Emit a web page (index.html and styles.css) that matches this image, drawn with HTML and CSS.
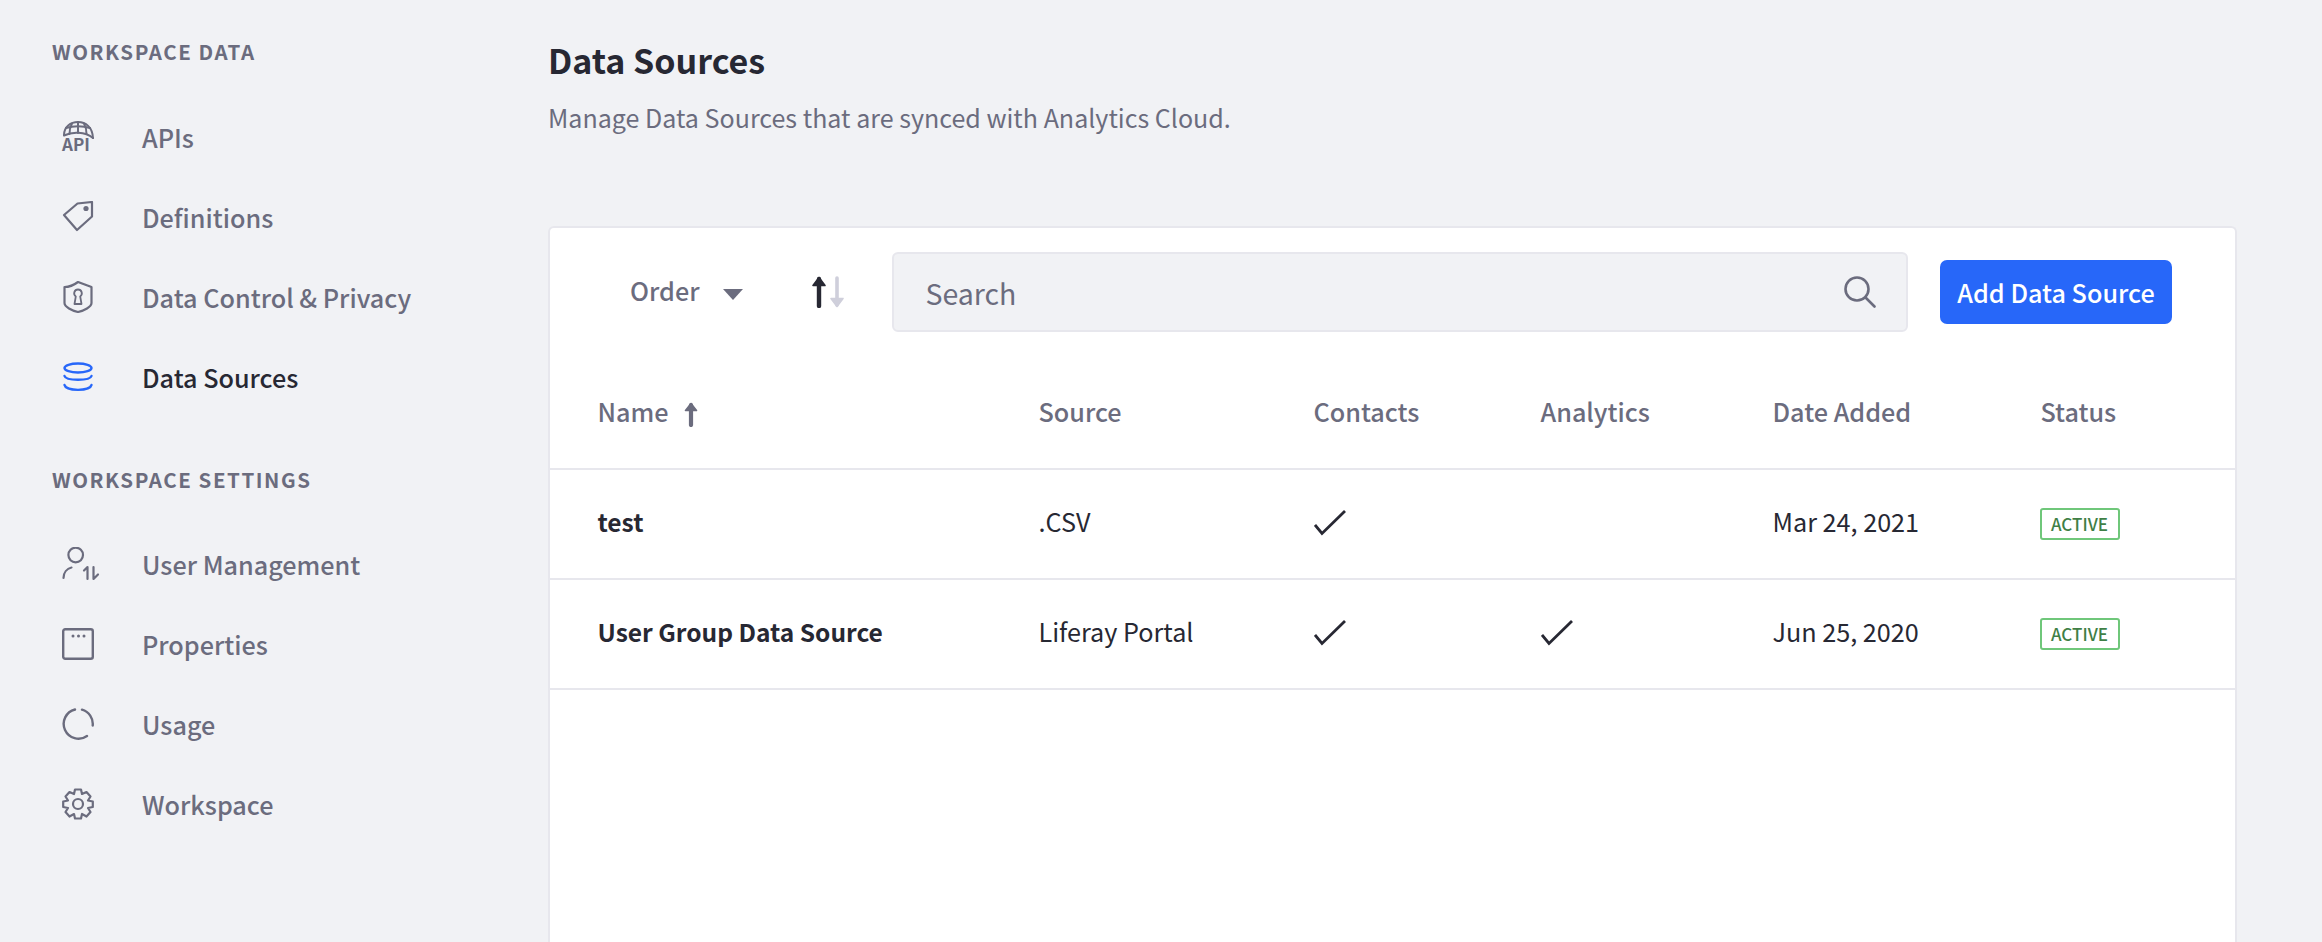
FILE: index.html
```html
<!DOCTYPE html>
<html lang="en">
<head>
  <meta charset="UTF-8">
  <title>Data Sources</title>
  <link rel="stylesheet" href="styles.css">
</head>
<body>

  <!-- Sidebar -->
  <aside class="sidebar">
    <h2 class="side-title">WORKSPACE DATA</h2>
    <a class="side-item">
      <svg class="side-icon" viewBox="0 0 32 32" fill="none" stroke="currentColor" stroke-width="2" stroke-linecap="round">
        <path d="M2 14C2 6 8.500 1 16 1S30.500 6 31 17"/>
        <path d="M2 14.500C10 10.500 23 10.500 31 17"/>
        <path d="M4 7C11 4.500 21 4.500 28 7"/>
        <path d="M16 1V12"/>
        <path d="M10 2.500C8 6 7.500 9 7.500 13"/>
        <path d="M22 2.500C24 6 24.500 9 24.500 13"/>
      </svg>
      <span class="api-mark">API</span>
      <span>APIs</span>
    </a>
    <a class="side-item">
      <svg class="side-icon" viewBox="0 0 32 32" fill="none" stroke="currentColor" stroke-width="2.200" stroke-linejoin="round">
        <path d="M2 14L15.500 2.500L30 1V15.500L15 29Z"/>
        <circle cx="24" cy="7.500" r="2.600" fill="currentColor" stroke="none"/>
      </svg>
      <span>Definitions</span>
    </a>
    <a class="side-item">
      <svg class="side-icon" viewBox="0 0 32 32" fill="none" stroke="currentColor" stroke-width="2.200" stroke-linejoin="round">
        <path d="M16 1L29.500 6V22C29.500 26 22 29.500 16 31C10 29.500 2.500 26 2.500 22V6C6 6 12 4 16 1Z"/>
        <path d="M16 8.500A3.800 3.800 0 0 1 18.200 15.400L19.500 23H12.500L13.800 15.400A3.800 3.800 0 0 1 16 8.500Z" stroke-width="1.800"/>
      </svg>
      <span>Data Control &amp; Privacy</span>
    </a>
    <a class="side-item side-active">
      <svg class="side-icon icon-blue" viewBox="0 0 32 32" fill="none" stroke="currentColor" stroke-width="2.400" stroke-linecap="round">
        <ellipse cx="16" cy="7" rx="13.500" ry="4.500"/>
        <path d="M2.500 15C4 20 28 20 29.500 15"/>
        <path d="M2.500 24C4 30.500 28 30.500 29.500 24"/>
      </svg>
      <span>Data Sources</span>
    </a>

    <h2 class="side-title side-title-second">WORKSPACE SETTINGS</h2>
    <a class="side-item">
      <svg class="side-icon side-icon-wide" viewBox="0 0 38 34" fill="none" stroke="currentColor" stroke-width="2.200" stroke-linecap="round" stroke-linejoin="round">
        <circle cx="13.700" cy="8" r="7.300"/>
        <path d="M1.500 31C1.500 25.500 5 21.500 9.500 20.500"/>
        <path d="M25.500 32V20L22 23.500"/>
        <path d="M31.500 20V32L36 27.500"/>
      </svg>
      <span>User Management</span>
    </a>
    <a class="side-item">
      <svg class="side-icon" viewBox="0 0 32 32" fill="none" stroke="currentColor" stroke-width="2.400">
        <rect x="1.200" y="1.200" width="29.600" height="29.600" rx="2"/>
        <circle cx="11" cy="8" r="1.500" fill="currentColor" stroke="none"/>
        <circle cx="16.500" cy="8" r="1.500" fill="currentColor" stroke="none"/>
        <circle cx="22" cy="8" r="1.500" fill="currentColor" stroke="none"/>
      </svg>
      <span>Properties</span>
    </a>
    <a class="side-item">
      <svg class="side-icon" viewBox="0 0 32 32" fill="none" stroke="currentColor" stroke-width="2.400" stroke-linecap="round">
        <path d="M13 1.500A14.800 14.800 0 1 0 25 28"/>
        <path d="M20 1.700A14.800 14.800 0 0 1 30.700 17.500"/>
      </svg>
      <span>Usage</span>
    </a>
    <a class="side-item">
      <svg class="side-icon" viewBox="0 0 32 32" fill="none" stroke="currentColor" stroke-width="2.200" stroke-linejoin="round">
        <path d="M13 1.500H19L20 6L24.500 4L28.500 8.500L26 12.500L30.800 13.500V19L26 20L28.500 24L24.500 28.500L20 26L19 30.500H13L12 26L7.500 28.500L3.500 24L6 20L1.200 19V13.500L6 12.500L3.500 8.500L7.500 4L12 6Z"/>
        <circle cx="16" cy="16" r="5"/>
      </svg>
      <span>Workspace</span>
    </a>
  </aside>

  <!-- Main content -->
  <main class="content">
    <h1 class="page-title">Data Sources</h1>
    <p class="page-sub">Manage Data Sources that are synced with Analytics Cloud.</p>

    <section class="card">
      <div class="toolbar">
        <span class="order-label">Order</span>
        <span class="caret"></span>
        <svg class="sort-icon" viewBox="0 0 34 32" fill="none" stroke-width="4.400" stroke-linecap="round" stroke-linejoin="round">
          <path d="M8 30V3" stroke="#272833"/>
          <path d="M2 9.500L8 1.500L14 9.500Z" stroke="#272833" stroke-width="1.600" fill="#272833"/>
          <path d="M26 2V29" stroke="#cfcfdb" stroke-width="3.600"/>
          <path d="M20 22.500L26 30.500L32 22.500Z" stroke="#cfcfdb" stroke-width="1.600" fill="#cfcfdb"/>
        </svg>
        <div class="search">
          <span class="search-text">Search</span>
          <svg class="search-icon" viewBox="0 0 32 32" fill="none" stroke="#6b6c7e" stroke-width="2.600" stroke-linecap="round">
            <circle cx="13" cy="13" r="11.500"/>
            <path d="M21.500 21.500L30.500 30.500"/>
          </svg>
        </div>
        <button class="btn-add">Add Data Source</button>
      </div>

      <table class="sources">
        <colgroup>
          <col class="col-name"><col class="col-source"><col class="col-contacts"><col class="col-analytics"><col class="col-date"><col>
        </colgroup>
        <thead>
          <tr>
            <th>Name
              <svg class="name-arrow" viewBox="0 0 14 25" fill="none" stroke="#6b6c7e" stroke-width="4.200" stroke-linecap="round" stroke-linejoin="round">
                <path d="M7 23V3"/>
                <path d="M1.500 8.500L7 1.500L12.500 8.500Z" stroke-width="1.600" fill="#6b6c7e"/>
              </svg>
            </th>
            <th>Source</th>
            <th>Contacts</th>
            <th>Analytics</th>
            <th>Date Added</th>
            <th>Status</th>
          </tr>
        </thead>
        <tbody>
          <tr>
            <td class="row-name">test</td>
            <td>.CSV</td>
            <td><svg class="check" viewBox="0 0 32 26" fill="none" stroke="#272833" stroke-width="2.800"><path d="M1 15L8 23.500L31 1"/></svg></td>
            <td></td>
            <td>Mar 24, 2021</td>
            <td><span class="badge">ACTIVE</span></td>
          </tr>
          <tr>
            <td class="row-name">User Group Data Source</td>
            <td>Liferay Portal</td>
            <td><svg class="check" viewBox="0 0 32 26" fill="none" stroke="#272833" stroke-width="2.800"><path d="M1 15L8 23.500L31 1"/></svg></td>
            <td><svg class="check" viewBox="0 0 32 26" fill="none" stroke="#272833" stroke-width="2.800"><path d="M1 15L8 23.500L31 1"/></svg></td>
            <td>Jun 25, 2020</td>
            <td><span class="badge">ACTIVE</span></td>
          </tr>
        </tbody>
      </table>
    </section>
  </main>

</body>
</html>
```

FILE: styles.css
```css
/* Base */
body {
  margin: 0;
  height: 942px;
  overflow: hidden;
  display: flex;
  background-color: #f1f2f5;
  color: #272833;
  font-family: "Noto Sans CJK SC", "Noto Sans", sans-serif;
}

/* Sidebar */
.sidebar {
  width: 548px;
  flex: none;
  box-sizing: border-box;
  padding: 37px 0 0 52px;
}

.side-title {
  margin: 0 0 31.500px;
  height: 28px;
  line-height: 28px;
  font-size: 20.500px;
  font-weight: 700;
  letter-spacing: 1.550px;
  color: #6b6c7e;
}

.side-title-second {
  margin-top: 48px;
}

.side-item {
  position: relative;
  display: flex;
  align-items: center;
  height: 80px;
  padding-left: 10px;
  font-size: 25.200px;
  font-weight: 500;
  color: #6b6c7e;
}

.side-icon {
  width: 32px;
  height: 32px;
  flex: none;
  margin-right: 48px;
}

.side-icon-wide {
  width: 38px;
  height: 34px;
  margin-right: 42px;
}

.api-mark {
  position: absolute;
  left: 10px;
  top: 37px;
  font-size: 17px;
  line-height: 20px;
  font-weight: 700;
}

.side-active {
  color: #272833;
}

.icon-blue {
  color: #2767f9;
}

/* Main */
.content {
  flex: 1;
  min-width: 0;
  display: flex;
  flex-direction: column;
  padding-right: 85px;
}

.page-title {
  margin: 36px 0 0;
  height: 48px;
  line-height: 48px;
  font-size: 34px;
  font-weight: 700;
}

.page-sub {
  margin: 14px 0 0;
  height: 38px;
  line-height: 38px;
  font-size: 25.050px;
  color: #6b6c7e;
}

.card {
  flex: 1;
  box-sizing: border-box;
  margin-top: 90px;
  background-color: #fff;
  border: 2px solid #e7e7ed;
  border-bottom: 0;
  border-radius: 6px 6px 0 0;
}

.toolbar {
  display: flex;
  align-items: center;
  height: 80px;
  margin-top: 24px;
  padding-left: 80px;
  padding-right: 63px;
}

.order-label {
  margin-bottom: 5px;
  font-size: 25.200px;
  font-weight: 500;
  color: #6b6c7e;
}

.caret {
  margin: 4px 0 0 24px;
  border-left: 10px solid transparent;
  border-right: 10px solid transparent;
  border-top: 11px solid #6b6c7e;
}

.sort-icon {
  width: 34px;
  height: 32px;
  flex: none;
  margin-left: 68px;
}

.search {
  flex: 1;
  display: flex;
  align-items: center;
  justify-content: space-between;
  box-sizing: border-box;
  height: 80px;
  margin-left: 47px;
  padding: 0 30px 0 31px;
  background-color: #f1f2f5;
  border: 2px solid #e7e7ed;
  border-radius: 6px;
}

.search-text {
  font-size: 28.500px;
  color: #6b6c7e;
}

.search-icon {
  width: 32px;
  height: 32px;
}

.btn-add {
  width: 232px;
  height: 64px;
  margin-left: 32px;
  padding: 0;
  background-color: #2767f9;
  border: 0;
  border-radius: 7px;
  color: #fff;
  font-family: inherit;
  font-size: 25.200px;
  font-weight: 500;
}

/* Table */
.sources {
  width: 100%;
  table-layout: fixed;
  border-collapse: collapse;
}

.col-name { width: 488.500px; }
.col-source { width: 275px; }
.col-contacts { width: 227px; }
.col-analytics { width: 232px; }
.col-date { width: 268px; }

.sources th, .sources td {
  padding: 0;
  text-align: left;
  border-bottom: 2px solid #e7e7ed;
  font-size: 25.200px;
}

.sources th {
  height: 112px;
  padding-top: 23px;
  padding-bottom: 1px;
  font-weight: 500;
  color: #6b6c7e;
}

.sources td {
  height: 102px;
  padding-bottom: 6px;
}

.sources th:first-child, .sources td:first-child {
  padding-left: 47.500px;
}

.sources .row-name {
  font-size: 24.500px;
  font-weight: 700;
}

.name-arrow {
  width: 14px;
  height: 25px;
  margin-left: 10px;
  vertical-align: -5px;
}

.check {
  display: block;
  width: 32px;
  height: 26px;
  margin-top: 3px;
}

.badge {
  display: inline-block;
  box-sizing: border-box;
  height: 32px;
  width: 80px;
  margin-top: 4px;
  margin-left: -1px;
  line-height: 28px;
  text-align: center;
  border: 2px solid #6fc77a;
  border-radius: 3px;
  color: #3f7f46;
  font-size: 17px;
  font-weight: 500;
}
```
